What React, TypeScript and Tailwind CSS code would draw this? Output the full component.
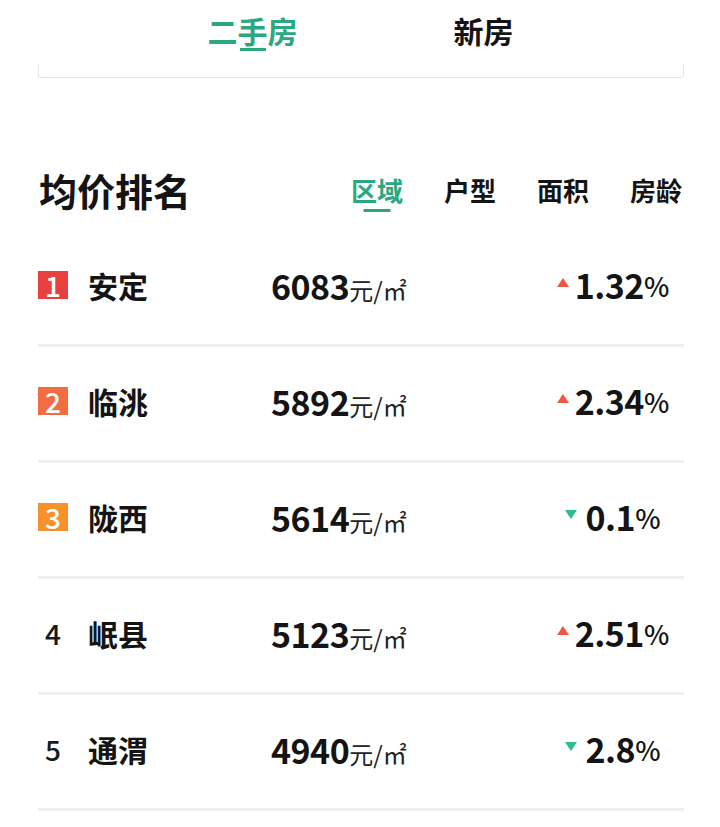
import React from "react";

type Row = {
  rank: number;
  name: string;
  price: number;
  change: string;
  up: boolean;
};

const rows: Row[] = [
  { rank: 1, name: "安定", price: 6083, change: "1.32", up: true },
  { rank: 2, name: "临洮", price: 5892, change: "2.34", up: true },
  { rank: 3, name: "陇西", price: 5614, change: "0.1", up: false },
  { rank: 4, name: "岷县", price: 5123, change: "2.51", up: true },
  { rank: 5, name: "通渭", price: 4940, change: "2.8", up: false },
];

const badgeColors: Record<number, string> = {
  1: "bg-[#e8403e]",
  2: "bg-[#f26d42]",
  3: "bg-[#f7912c]",
};

const font = { fontFamily: '"Noto Sans CJK SC", "Noto Sans", sans-serif' };

function RankBadge({ rank }: { rank: number }) {
  const color = badgeColors[rank];
  if (color) {
    return (
      <div
        className={`w-[30px] h-[28px] ${color} text-white text-[28px] font-medium flex items-center justify-center leading-none`}
      >
        {rank}
      </div>
    );
  }
  return (
    <div className="w-[30px] h-[28px] text-[#1a1a1a] text-[28px] font-medium flex items-center justify-center leading-none">
      {rank}
    </div>
  );
}

function Arrow({ up }: { up: boolean }) {
  return up ? (
    <svg width="12" height="9" viewBox="0 0 12 9" className="mr-[6px] -mt-[6px]">
      <polygon points="6,0 12,9 0,9" fill="#ef5643" />
    </svg>
  ) : (
    <svg width="12" height="9" viewBox="0 0 12 9" className="mr-[8px] -mt-[6px]">
      <polygon points="0,0 12,0 6,9" fill="#2bbd8c" />
    </svg>
  );
}

export default function App() {
  return (
    <div className="w-[720px] min-h-[827px] bg-white text-[#141414]" style={font}>
      {/* top tabs */}
      <div className="flex pl-[137px] pt-[10px] h-[64px]">
        <div className="relative w-[231px] text-center text-[30px] font-bold text-[#2aa882] leading-[40px]">
          二手房
          <div className="absolute left-1/2 -translate-x-1/2 top-[38px] w-[26px] h-[3px] bg-[#2aa882]" />
        </div>
        <div className="w-[231px] text-center text-[30px] font-bold leading-[40px]">新房</div>
      </div>
      <div className="mx-[38px] w-[646px] h-[14px] border-x border-b border-[#e6e6e6] rounded-b-[3px]" />

      {/* ranking */}
      <div className="mx-[38px] w-[646px] mt-[73px]">
        <div className="flex items-center justify-between h-[80px] pb-[2px]">
          <div className="pl-[1px] text-[38px] font-bold leading-none">均价排名</div>
          <div className="flex gap-[41px] mr-[2px] text-[26px] font-bold leading-none">
            <div className="relative text-[#2aa882]">
              区域
              <div className="absolute left-1/2 -translate-x-1/2 top-[32px] w-[27px] h-[3px] bg-[#2aa882]" />
            </div>
            <div>户型</div>
            <div>面积</div>
            <div>房龄</div>
          </div>
        </div>

        {rows.map((r) => (
          <div key={r.rank} className="border-b-[3px] border-[#efefef]">
            <div className="flex items-center h-[113px] pb-[5px]">
              <RankBadge rank={r.rank} />
              <div className="ml-[20px] w-[183px] text-[30px] font-bold leading-none">{r.name}</div>
              <div className="flex items-baseline">
                <span className="text-[34px] font-bold tracking-[-0.5px]">{r.price}</span>
                <span className="text-[24px] text-[#222]">元/㎡</span>
              </div>
              <div className="ml-auto mr-[6px] w-[130px] flex items-center justify-center">
                <Arrow up={r.up} />
                <span className="text-[34px] font-bold tracking-[-0.5px] leading-none">{r.change}</span>
                <span className="text-[27px] font-medium leading-none">%</span>
              </div>
            </div>
          </div>
        ))}
      </div>
    </div>
  );
}
